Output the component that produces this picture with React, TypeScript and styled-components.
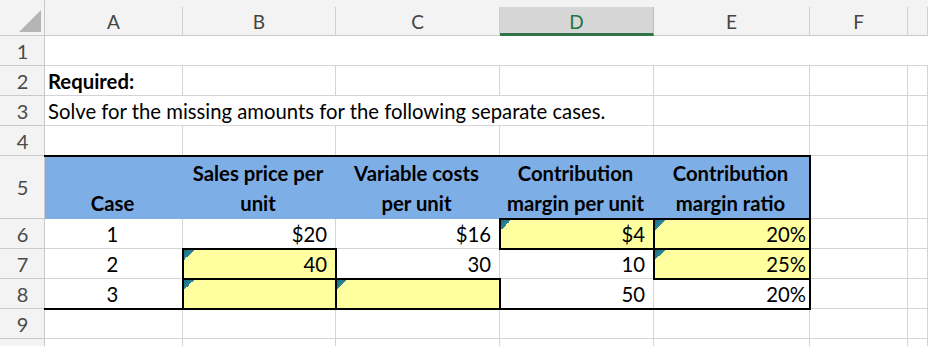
import React from 'react';
import styled, { createGlobalStyle, css } from 'styled-components';

const GlobalStyle = createGlobalStyle`
  html, body {
    margin: 0;
    padding: 0;
    background: #ffffff;
    overflow: hidden;
  }

  body {
    font-family: Lato, 'Open Sans', sans-serif;
    color: #000000;
  }
`;

const GRID = '#d4d4d4';
const HEAD_BG = '#f3f3f3';
const HEAD_LINE = '#c9c9c9';

type Sides = { t?: boolean; r?: boolean; b?: boolean; l?: boolean };

const Sheet = styled.div`
  display: grid;
  grid-template-columns: 45px 138px 153px 164px 154px 156px 98px 20px;
  grid-template-rows: 36px 30px 30px 30px 30px 63px 30px 30px 30px 30px 30px;
  width: 928px;
  height: 346px;
  overflow: hidden;
  font-size: 20.3px;
`;

const Corner = styled.div`
  background: ${HEAD_BG};
  box-shadow: inset -1px -1px 0 ${HEAD_LINE};
  display: flex;
  align-items: flex-end;
  justify-content: flex-end;
  padding: 0 3px 3px 0;

  svg {
    display: block;
  }
`;

const ColHead = styled.div`
  background: ${HEAD_BG};
  box-shadow: inset 0 -1px 0 ${HEAD_LINE};
  display: flex;
  flex-direction: column;
  justify-content: flex-end;
`;

const ColLabel = styled.div<{ $active?: boolean }>`
  height: 29px;
  display: flex;
  align-items: center;
  justify-content: center;
  box-sizing: border-box;
  border-right: 1px solid #d0d0d0;
  color: #444444;
  font-size: 19px;

  ${(p) =>
    p.$active &&
    css`
      background: #d6d6d6;
      color: #217346;
      border-right-color: #bcbcbc;
      border-bottom: 3px solid #2f7449;
      padding-top: 3px;
    `}
`;

const RowHead = styled.div`
  background: ${HEAD_BG};
  box-shadow: inset -1px -1px 0 ${HEAD_LINE};
  display: flex;
  align-items: center;
  justify-content: center;
  color: #4a4a4a;
  font-size: 20px;
  padding-bottom: 1px;
`;

const Cell = styled.div<{
  $span?: number;
  $fill?: 'blue' | 'yellow';
  $align?: 'left' | 'center' | 'right';
  $pad?: number;
  $bold?: boolean;
  $box?: Sides;
  $flag?: boolean;
  $noRight?: boolean;
  $wrap?: boolean;
}>`
  position: relative;
  grid-column: span ${(p) => p.$span ?? 1};
  display: flex;
  align-items: flex-end;
  justify-content: ${(p) =>
    p.$align === 'right' ? 'flex-end' : p.$align === 'center' ? 'center' : 'flex-start'};
  padding: 0 ${(p) => p.$pad ?? 3}px 0 ${(p) => (p.$align === 'left' || !p.$align ? 3 : 0)}px;
  white-space: nowrap;
  line-height: 30px;
  font-weight: ${(p) => (p.$bold ? 700 : 400)};
  background: ${(p) =>
    p.$fill === 'blue' ? '#7eaee6' : p.$fill === 'yellow' ? '#ffff9f' : '#ffffff'};
  box-shadow: ${(p) =>
    p.$fill ? 'none' : p.$noRight ? `inset 0 -1px 0 ${GRID}` : `inset -1px -1px 0 ${GRID}`};

  ${(p) =>
    p.$wrap &&
    css`
      text-align: center;
      padding-bottom: 1px;
    `}

  ${(p) =>
    p.$box &&
    css`
      &::after {
        content: '';
        position: absolute;
        top: -1px;
        left: -1px;
        right: -1px;
        bottom: -1px;
        z-index: 2;
        pointer-events: none;
        border-style: solid;
        border-color: #000000;
        border-width: ${p.$box.t ? 2 : 0}px ${p.$box.r ? 2 : 0}px ${p.$box.b ? 2 : 0}px
          ${p.$box.l ? 2 : 0}px;
      }
    `}

  ${(p) =>
    p.$flag &&
    css`
      &::before {
        content: '';
        position: absolute;
        top: 1px;
        left: 1px;
        width: 10px;
        height: 10px;
        z-index: 3;
        background: linear-gradient(135deg, #1b6d7e 0%, #2a8797 50%, transparent 50%);
      }
    `}
`;

const ALL: Sides = { t: true, r: true, b: true, l: true };
const cols = ['A', 'B', 'C', 'D', 'E', 'F', 'G'];

const headers: { lines: [string, string?]; box: Sides }[] = [
  { lines: ['Case'], box: { t: true } },
  { lines: ['Sales price per', 'unit'], box: { t: true } },
  { lines: ['Variable costs', 'per unit'], box: { t: true } },
  { lines: ['Contribution', 'margin per unit'], box: { t: true } },
  { lines: ['Contribution', 'margin ratio'], box: { t: true, r: true } },
];

const Empty = ({ n }: { n: number }) => (
  <>
    {Array.from({ length: n }).map((_, i) => (
      <Cell key={i} />
    ))}
  </>
);

export default function App() {
  return (
    <>
      <GlobalStyle />
      <Sheet>
        <Corner>
          <svg width="23" height="23" viewBox="0 0 23 23">
            <polygon points="22,0 22,22 0,22" fill="#b5b5b5" />
          </svg>
        </Corner>
        {cols.map((c) => (
          <ColHead key={c}>
            <ColLabel $active={c === 'D'}>{c === 'G' ? '' : c}</ColLabel>
          </ColHead>
        ))}

        <RowHead>1</RowHead>
        <Cell $span={7} $noRight />

        <RowHead>2</RowHead>
        <Cell $bold>Required:</Cell>
        <Empty n={6} />

        <RowHead>3</RowHead>
        <Cell $span={4}>Solve for the missing amounts for the following separate cases.</Cell>
        <Empty n={3} />

        <RowHead>4</RowHead>
        <Empty n={7} />

        <RowHead>5</RowHead>
        {headers.map((h) => (
          <Cell key={h.lines[0] + (h.lines[1] ?? '')} $fill="blue" $bold $align="center" $wrap $box={h.box}>
            <div>
              {h.lines[0]}
              {h.lines[1] && (
                <>
                  <br />
                  {h.lines[1]}
                </>
              )}
            </div>
          </Cell>
        ))}
        <Empty n={2} />

        <RowHead>6</RowHead>
        <Cell $align="center">1</Cell>
        <Cell $align="right" $pad={9}>$20</Cell>
        <Cell $align="right" $pad={9}>$16</Cell>
        <Cell $align="right" $pad={9} $fill="yellow" $flag $box={ALL}>$4</Cell>
        <Cell $align="right" $pad={4} $fill="yellow" $flag $box={ALL}>20%</Cell>
        <Empty n={2} />

        <RowHead>7</RowHead>
        <Cell $align="center">2</Cell>
        <Cell $align="right" $pad={9} $fill="yellow" $flag $box={ALL}>40</Cell>
        <Cell $align="right" $pad={9}>30</Cell>
        <Cell $align="right" $pad={9}>10</Cell>
        <Cell $align="right" $pad={4} $fill="yellow" $flag $box={ALL}>25%</Cell>
        <Empty n={2} />

        <RowHead>8</RowHead>
        <Cell $align="center" $box={{ b: true }}>3</Cell>
        <Cell $fill="yellow" $flag $box={ALL} />
        <Cell $fill="yellow" $flag $box={ALL} />
        <Cell $align="right" $pad={9} $box={{ b: true }}>50</Cell>
        <Cell $align="right" $pad={4} $box={{ r: true, b: true }}>20%</Cell>
        <Empty n={2} />

        <RowHead>9</RowHead>
        <Empty n={7} />

        <RowHead />
        <Empty n={7} />
      </Sheet>
    </>
  );
}
